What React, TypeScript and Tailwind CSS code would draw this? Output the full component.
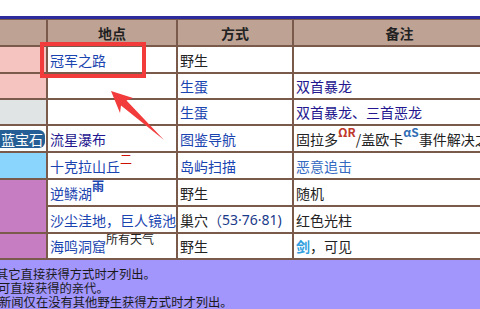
import React from "react";

const FONT = '"Noto Sans CJK SC", "Noto Sans", sans-serif';
const LATIN = '"Noto Sans", "Noto Sans CJK SC", sans-serif';

const link = "text-[#1a45b0]";
const visited = "text-[#23178f]";

function Cell({ className = "", children }: { className?: string; children?: React.ReactNode }) {
  return (
    <div className={`bg-white flex items-center px-[2px] whitespace-nowrap overflow-hidden ${className}`}>
      {children}
    </div>
  );
}

function Sup({ className = "", children }: { className?: string; children: React.ReactNode }) {
  return <span className={`text-[12px] leading-none relative -top-[7px] ${className}`}>{children}</span>;
}

export default function App() {
  return (
    <div className="relative w-[480px] h-[309px] overflow-hidden bg-white text-[14px] text-[#222]" style={{ fontFamily: FONT }}>
      <div className="pt-[16px]">
        <div className="h-[3px] w-[505px] bg-[#2e2b9c]" />
        <div className="grid w-[505px] grid-cols-[46px_128px_114px_211px] grid-rows-[25px_25px_24px_24px_25px_25px_25px_25px_24px] gap-[2px] bg-[#7a5a4a] pt-[1px] pb-[2px] leading-none">
          {/* header */}
          <div className="bg-[#bea294]" />
          <div className="bg-[#bea294] flex items-center justify-center font-bold">地点</div>
          <div className="bg-[#bea294] flex items-center justify-center font-bold">方式</div>
          <div className="bg-[#bea294] flex items-center justify-center font-bold">备注</div>

          {/* 冠军之路 */}
          <div className="bg-[#f5c3c0]" />
          <Cell className={link}>冠军之路</Cell>
          <Cell>野生</Cell>
          <Cell />

          <div className="bg-[#f5c3c0]" />
          <Cell />
          <Cell className={link}>生蛋</Cell>
          <Cell className={visited}>双首暴龙</Cell>

          <div className="bg-[#e1e4e4]" />
          <Cell />
          <Cell className={link}>生蛋</Cell>
          <Cell className={visited}>双首暴龙、三首恶龙</Cell>

          {/* 流星瀑布 */}
          <div className="bg-white flex items-center">
            <span className="-ml-[6px] h-[18px] w-[51px] rounded-[6px] bg-[#255f96] text-white flex items-center justify-end pr-[2px] text-[14px]">
              蓝宝石
            </span>
          </div>
          <Cell className={visited}>流星瀑布</Cell>
          <Cell className={link}>图鉴导航</Cell>
          <Cell>
            固拉多<Sup className="font-bold text-[#c0392b]">ΩR</Sup>/盖欧卡<Sup className="font-bold text-[#2f6db5]">αS</Sup>事件解决之后
          </Cell>

          {/* 十克拉山丘 */}
          <div className="bg-[#8ad5fd]" />
          <Cell className={link}>
            十克拉山丘<Sup className="text-[#cc1100]">二</Sup>
          </Cell>
          <Cell className={link}>岛屿扫描</Cell>
          <Cell className="text-[#3469c2]">恶意追击</Cell>

          {/* 逆鳞湖 / 沙尘洼地 */}
          <div className="bg-[#c77dc2] row-span-2" />
          <Cell className={link}>
            逆鳞湖<Sup className="font-bold text-[#1a45b0]">雨</Sup>
          </Cell>
          <Cell>野生</Cell>
          <Cell>随机</Cell>

          <Cell className={link}>沙尘洼地，巨人镜池</Cell>
          <Cell>
            巢穴<span className="text-[#1a3a8a]">（</span>
            <span className="text-[#1a3a8a]" style={{ fontFamily: LATIN }}>
              53·76·81)
            </span>
          </Cell>
          <Cell>红色光柱</Cell>

          {/* 海鸣洞窟 */}
          <div className="bg-[#c77dc2]" />
          <Cell className={link}>
            海鸣洞窟<Sup className="text-[#222]">所有天气</Sup>
          </Cell>
          <Cell>野生</Cell>
          <Cell>
            <span className="font-bold text-[#2f9ee0]">剑</span>，可见
          </Cell>
        </div>

        <div className="bg-[#a296fc] h-[49px] pt-[7px] text-[12.3px] leading-[14px] text-[#1a1a1a]">
          <div className="-ml-[4px] whitespace-nowrap">其它直接获得方式时才列出。</div>
          <div className="-ml-[2px] whitespace-nowrap">可直接获得的亲代。</div>
          <div className="-ml-[1px] whitespace-nowrap">新闻仅在没有其他野生获得方式时才列出。</div>
        </div>
      </div>

      {/* annotation: highlight box and pointer */}
      <div className="absolute left-[40px] top-[42px] w-[106px] h-[36px] border-[4px] border-[#f23b3b]" />
      <svg className="absolute left-0 top-0" width="480" height="309" viewBox="0 0 480 309">
        <polygon points="111,91 133,98 126.5,100.5 164,140 121,105.5 120,113" fill="#f23b3b" />
      </svg>
    </div>
  );
}
